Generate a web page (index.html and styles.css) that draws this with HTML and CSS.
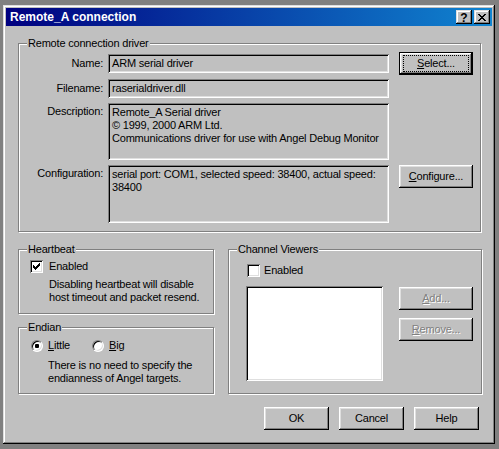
FILE: index.html
```html
<!DOCTYPE html>
<html>
<head>
<meta charset="utf-8">
<link rel="stylesheet" href="styles.css">
</head>
<body>
<div class="window">
  <div class="titlebar">
    <span class="title">Remote_A connection</span>
    <div class="caption-btns">
      <span class="cbtn help">?</span>
      <span class="cbtn"><svg width="8" height="7" viewBox="0 0 8 7" shape-rendering="crispEdges"><path d="M0 0h2v1H0zM6 0h2v1H6zM1 1h2v1H1zM5 1h2v1H5zM2 2h4v1H2zM3 3h2v1H3zM2 4h4v1H2zM1 5h2v1H1zM5 5h2v1H5zM0 6h2v1H0zM6 6h2v1H6z" fill="#000"/></svg></span>
    </div>
  </div>
  <div class="content">
    <div class="group g-driver">
      <span class="legend">Remote connection driver</span>
      <div class="driver-grid">
        <span class="lbl mid">Name:</span>
        <div class="field single">ARM serial driver</div>
        <button class="btn default"><u>S</u>elect...</button>

        <span class="lbl">Filename:</span>
        <div class="field single">raserialdriver.dll</div>
        <span></span>

        <span class="lbl multi">Description:</span>
        <div class="field multi">Remote_A Serial driver<br>© 1999, 2000 ARM Ltd.<br>Communications driver for use with Angel Debug Monitor</div>
        <span></span>

        <span class="lbl multi">Configuration:</span>
        <div class="field multi">serial port: COM1, selected speed: 38400, actual speed:<br>38400</div>
        <button class="btn top"><u>C</u>onfigure...</button>
      </div>
    </div>

    <div class="lower">
      <div class="left-col">
        <div class="group heartbeat">
          <span class="legend">Heartbeat</span>
          <div class="check-row">
            <span class="check"><svg width="13" height="13" viewBox="0 0 13 13" shape-rendering="crispEdges"><path d="M3 5h1v3H3zM4 6h1v3H4zM5 7h1v3H5zM6 6h1v3H6zM7 5h1v3H7zM8 4h1v3H8zM9 3h1v3H9z" fill="#000"/></svg></span>
            <span>Enabled</span>
          </div>
          <p class="desc">Disabling heartbeat will disable<br>host timeout and packet resend.</p>
        </div>
        <div class="group endian">
          <span class="legend">Endian</span>
          <div class="radio-row">
            <span class="opt"><span class="radio"><span class="dot"></span></span><span><u>L</u>ittle</span></span>
            <span class="opt"><span class="radio"></span><span><u>B</u>ig</span></span>
          </div>
          <p class="desc">There is no need to specify the<br>endianness of Angel targets.</p>
        </div>
      </div>
      <div class="group channel">
        <span class="legend">Channel Viewers</span>
        <div class="check-row">
          <span class="check"></span>
          <span>Enabled</span>
        </div>
        <div class="channel-body">
          <div class="listbox"></div>
          <div class="side-btns">
            <button class="btn disabled"><u>A</u>dd...</button>
            <button class="btn disabled"><u>R</u>emove...</button>
          </div>
        </div>
      </div>
    </div>

    <div class="actions">
      <button class="btn wide">OK</button>
      <button class="btn wide">Cancel</button>
      <button class="btn wide">Help</button>
    </div>
  </div>
</div>
</body>
</html>
```
FILE: styles.css
```css
* { box-sizing: border-box; }
html, body { margin: 0; }
body {
  width: 499px;
  height: 449px;
  overflow: hidden;
  padding: 5px 0 0 3px;
  background: #808080;
  font-family: "Liberation Sans", Arial, sans-serif;
  font-size: 11px;
  line-height: 13px;
  letter-spacing: -0.2px;
  color: #000;
}
.window {
  width: 492px;
  height: 439px;
  padding: 3px;
  background: #c0c0c0;
  box-shadow: inset -1px -1px #000, inset 1px 1px #dfdfdf, inset -2px -2px #808080, inset 2px 2px #fff;
}
.titlebar {
  height: 18px;
  display: flex;
  align-items: center;
  justify-content: space-between;
  padding: 0 2px 0 4px;
  background: linear-gradient(to right, #000080, #1084d0);
}
.title {
  color: #fff;
  font-weight: bold;
  font-size: 12px;
  letter-spacing: 0;
}
.caption-btns { display: flex; gap: 2px; }
.cbtn {
  width: 16px;
  height: 14px;
  display: flex;
  align-items: center;
  justify-content: center;
  background: #c0c0c0;
  box-shadow: inset -1px -1px #000, inset 1px 1px #dfdfdf, inset -2px -2px #808080, inset 2px 2px #fff;
}
.cbtn.help {
  font-weight: bold;
  font-size: 12px;
  line-height: 12px;
  letter-spacing: 0;
  padding-top: 1px;
}
.content {
  padding: 17px 10px 0 12px;
}
.group {
  position: relative;
  border: 1px solid #808080;
  box-shadow: inset 1px 1px #fff, 1px 1px #fff;
}
.legend {
  position: absolute;
  top: -7px;
  left: 8px;
  padding: 0 1px;
  background: #c0c0c0;
  white-space: nowrap;
}
.g-driver { width: 463px; }
.driver-grid {
  display: grid;
  grid-template-columns: 76px 281px 74px;
  grid-template-rows: 22px 19px 57px 58px;
  column-gap: 5px;
  row-gap: 5px;
  padding: 8px 7px 8px 8px;
}
.driver-grid .btn { margin-left: 5px; }
.lbl {
  text-align: right;
  align-self: start;
  padding-top: 3px;
  white-space: nowrap;
}
.lbl.mid { align-self: center; padding-top: 0; }
.lbl.multi { padding-top: 2px; }
.field {
  background: #c0c0c0;
  box-shadow: inset 1px 1px #808080, inset -1px -1px #fff, inset 2px 2px #000, inset -2px -2px #dfdfdf;
  padding: 3px 2px 0 4px;
  white-space: nowrap;
  overflow: hidden;
}
.field.single { height: 19px; align-self: center; }
.btn {
  font-family: "Liberation Sans", Arial, sans-serif;
  font-size: 11px;
  line-height: 13px;
  letter-spacing: -0.2px;
  color: #000;
  width: 74px;
  height: 23px;
  padding: 0;
  border: none;
  background: #c0c0c0;
  box-shadow: inset -1px -1px #000, inset 1px 1px #fff, inset -2px -2px #808080, inset 2px 2px #dfdfdf;
}
.btn.top { align-self: start; }
.btn.default {
  position: relative;
  align-self: start;
  border: 1px solid #000;
}
.btn.default::after {
  content: "";
  position: absolute;
  inset: 2px 3px;
  border: 1px dotted #000;
}
.btn.disabled {
  color: #808080;
  text-shadow: 1px 1px 0 #fff;
}
.btn.wide { width: 65px; }
.lower {
  display: flex;
  gap: 14px;
  margin-top: 17px;
}
.left-col {
  width: 196px;
  display: flex;
  flex-direction: column;
  gap: 13px;
}
.heartbeat { height: 65px; padding: 10px 0 0 11px; }
.endian { height: 67px; padding: 11px 0 0 12px; }
.channel { width: 254px; height: 145px; padding: 14px 0 0 17px; }
.check-row {
  display: flex;
  align-items: center;
  gap: 6px;
  height: 13px;
}
.channel .check-row { gap: 4px; padding-left: 1px; }
.check {
  width: 13px;
  height: 13px;
  background: #fff;
  box-shadow: inset 1px 1px #808080, inset -1px -1px #fff, inset 2px 2px #000, inset -2px -2px #dfdfdf;
  display: flex;
}
.desc {
  margin: 5px 0 0 19px;
  white-space: nowrap;
}
.endian .desc { margin: 7px 0 0 17px; }
.radio-row { display: flex; height: 13px; align-items: center; }
.opt {
  width: 61px;
  display: flex;
  align-items: center;
  gap: 5px;
}
.radio {
  width: 12px;
  height: 12px;
  border-radius: 50%;
  background: #fff;
  border: 1px solid;
  border-color: #808080 #fff #fff #808080;
  box-shadow: inset 1px 1px #000, inset -1px -1px #dfdfdf;
  display: flex;
  align-items: center;
  justify-content: center;
}
.dot {
  width: 4px;
  height: 4px;
  border-radius: 1px;
  background: #000;
}
.channel-body {
  display: flex;
  margin-top: 9px;
  gap: 16px;
}
.listbox {
  width: 137px;
  height: 95px;
  background: #fff;
  box-shadow: inset 1px 1px #808080, inset -1px -1px #fff, inset 2px 2px #000, inset -2px -2px #dfdfdf;
}
.side-btns {
  display: flex;
  flex-direction: column;
  gap: 8px;
  padding-top: 1px;
}
.actions {
  display: flex;
  justify-content: flex-end;
  gap: 10px;
  margin-top: 13px;
  padding-right: 3px;
}
```
